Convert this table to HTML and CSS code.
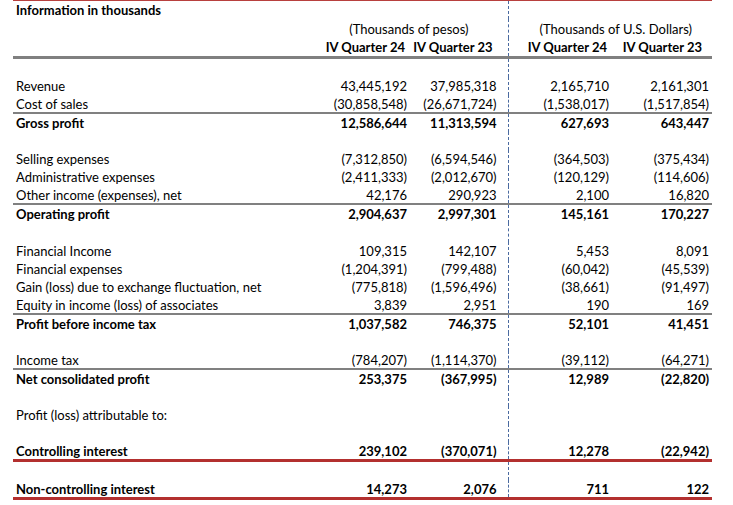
FILE: index.html
```html
<!DOCTYPE html>
<html>
<head>
<meta charset="utf-8">
<link rel="stylesheet" href="styles.css">
</head>
<body>
<table class="fin">
  <colgroup>
    <col class="c-label"><col class="c-a"><col class="c-b"><col class="c-c"><col class="c-d">
  </colgroup>
  <tr class="r-title">
    <td class="lbl b">Information in thousands</td>
    <td></td><td class="sep"></td><td></td><td></td>
  </tr>
  <tr class="r-unit">
    <td></td>
    <td class="unit u-pesos sep" colspan="2">(Thousands of pesos)</td>
    <td class="unit u-usd" colspan="2">(Thousands of U.S. Dollars)</td>
  </tr>
  <tr class="r-head">
    <td></td>
    <td class="h h1">IV Quarter 24</td>
    <td class="h h2 sep">IV Quarter 23</td>
    <td class="h h3">IV Quarter 24</td>
    <td class="h h4">IV Quarter 23</td>
  </tr>
  <tr><td></td><td></td><td class="sep"></td><td></td><td></td></tr>
  <tr><td class="lbl">Revenue</td><td class="n">43,445,192</td><td class="n sep">37,985,318</td><td class="n">2,165,710</td><td class="n">2,161,301</td></tr>
  <tr class="r-line"><td class="lbl">Cost of sales</td><td class="n">(30,858,548)</td><td class="n sep">(26,671,724)</td><td class="n">(1,538,017)</td><td class="n">(1,517,854)</td></tr>
  <tr class="b"><td class="lbl">Gross profit</td><td class="n">12,586,644</td><td class="n sep">11,313,594</td><td class="n">627,693</td><td class="n">643,447</td></tr>
  <tr><td></td><td></td><td class="sep"></td><td></td><td></td></tr>
  <tr><td class="lbl">Selling expenses</td><td class="n">(7,312,850)</td><td class="n sep">(6,594,546)</td><td class="n">(364,503)</td><td class="n">(375,434)</td></tr>
  <tr><td class="lbl">Administrative expenses</td><td class="n">(2,411,333)</td><td class="n sep">(2,012,670)</td><td class="n">(120,129)</td><td class="n">(114,606)</td></tr>
  <tr class="r-line"><td class="lbl">Other income (expenses), net</td><td class="n">42,176</td><td class="n sep">290,923</td><td class="n">2,100</td><td class="n">16,820</td></tr>
  <tr class="b"><td class="lbl">Operating profit</td><td class="n">2,904,637</td><td class="n sep">2,997,301</td><td class="n">145,161</td><td class="n">170,227</td></tr>
  <tr class="r-gap"><td></td><td></td><td class="sep"></td><td></td><td></td></tr>
  <tr><td class="lbl">Financial Income</td><td class="n">109,315</td><td class="n sep">142,107</td><td class="n">5,453</td><td class="n">8,091</td></tr>
  <tr><td class="lbl">Financial expenses</td><td class="n">(1,204,391)</td><td class="n sep">(799,488)</td><td class="n">(60,042)</td><td class="n">(45,539)</td></tr>
  <tr><td class="lbl">Gain (loss) due to exchange fluctuation, net</td><td class="n">(775,818)</td><td class="n sep">(1,596,496)</td><td class="n">(38,661)</td><td class="n">(91,497)</td></tr>
  <tr class="r-line"><td class="lbl">Equity in income (loss) of associates</td><td class="n">3,839</td><td class="n sep">2,951</td><td class="n">190</td><td class="n">169</td></tr>
  <tr class="b"><td class="lbl">Profit before income tax</td><td class="n">1,037,582</td><td class="n sep">746,375</td><td class="n">52,101</td><td class="n">41,451</td></tr>
  <tr><td></td><td></td><td class="sep"></td><td></td><td></td></tr>
  <tr class="r-line"><td class="lbl">Income tax</td><td class="n">(784,207)</td><td class="n sep">(1,114,370)</td><td class="n">(39,112)</td><td class="n">(64,271)</td></tr>
  <tr class="b"><td class="lbl">Net consolidated profit</td><td class="n">253,375</td><td class="n sep">(367,995)</td><td class="n">12,989</td><td class="n">(22,820)</td></tr>
  <tr><td></td><td></td><td class="sep"></td><td></td><td></td></tr>
  <tr><td class="lbl">Profit (loss) attributable to:</td><td></td><td class="sep"></td><td></td><td></td></tr>
  <tr><td></td><td></td><td class="sep"></td><td></td><td></td></tr>
  <tr class="b r-red"><td class="lbl">Controlling interest</td><td class="n">239,102</td><td class="n sep">(370,071)</td><td class="n">12,278</td><td class="n">(22,942)</td></tr>
  <tr><td></td><td></td><td class="sep"></td><td></td><td></td></tr>
  <tr class="b r-red"><td class="lbl">Non-controlling interest</td><td class="n">14,273</td><td class="n sep">2,076</td><td class="n">711</td><td class="n">122</td></tr>
</table>
</body>
</html>
```

FILE: styles.css
```css
html, body {
  margin: 0;
  padding: 0;
  background: #ffffff;
}
body {
  padding-left: 13px;
  font-family: Lato, "Open Sans", sans-serif;
  font-size: 13px;
  color: #000000;
}
.fin {
  border-collapse: collapse;
  table-layout: fixed;
  width: 699px;
  font-variant-numeric: tabular-nums;
}
.c-label { width: 312px; }
.c-a { width: 85px; }
.c-b { width: 98px; }
.c-c { width: 104px; }
.c-d { width: 100px; }

.fin td {
  height: 18px;
  padding: 0;
  line-height: 16px;
  white-space: nowrap;
  vertical-align: middle;
}
.fin .lbl { padding-left: 3px; text-align: left; }
.b td, td.b { font-weight: 700; }

.r-title td {
  border-top: 1px solid #b8403e;
  height: 18px;
}
.r-unit td { height: 19px; }
.r-head td { height: 18px; }
.unit { text-align: right; }
.u-pesos { padding-right: 39px !important; }
.u-usd { padding-right: 20px !important; }

.r-head td { border-bottom: 3px solid #808080; }
.h { font-weight: 700; text-align: right; }
.h1 { padding-right: 5px !important; }
.h2 { padding-right: 15px !important; }
.h3 { padding-right: 5px !important; }
.h4 { padding-right: 10px !important; }

.n { text-align: right; padding-right: 3px !important; }
td.n.sep { padding-right: 11px !important; }

.fin td.sep { border-right: 1px dashed #4a6aa0; }

.r-gap td { height: 19px; }
.r-line td { border-bottom: 2px solid #808080; height: 17px; }
.r-red td { border-bottom: 3px solid #b3302f; height: 17px; }
```
